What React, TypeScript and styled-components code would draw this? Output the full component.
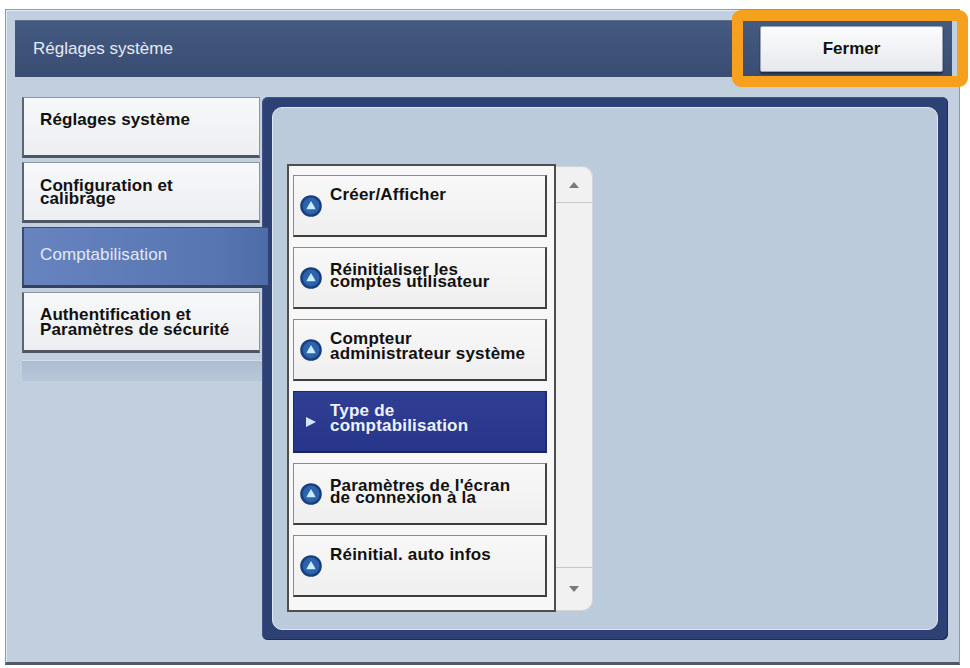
import React from "react";
import styled, { createGlobalStyle } from "styled-components";

const GlobalStyle = createGlobalStyle`
  html, body {
    margin: 0;
    padding: 0;
    background: #ffffff;
  }
  body {
    font-family: "Liberation Sans", Arial, sans-serif;
  }
`;

const Page = styled.div`
  width: 970px;
  height: 668px;
  padding: 9px 0 0 5px;
  box-sizing: border-box;
  overflow: hidden;
`;

const Frame = styled.div`
  width: 955px;
  height: 656px;
  box-sizing: border-box;
  border: 1px solid #8d99aa;
  border-bottom: 3px solid #50586a;
  background: #c2cfde;
  padding: 10px 7px 0 9px;
  box-shadow: inset 1px 1px 0 #e4ebf3;
`;

const TitleBar = styled.div`
  height: 57px;
  box-sizing: border-box;
  display: flex;
  align-items: center;
  justify-content: space-between;
  background: linear-gradient(#455a80, #394d73);
  border-top: 1px solid #5d7092;
  padding: 0 9px 0 18px;
`;

const Title = styled.span`
  color: #e4eaf3;
  font-size: 17px;
`;

const CloseWrap = styled.div`
  position: relative;
`;

const CloseButton = styled.button`
  width: 183px;
  height: 46px;
  box-sizing: border-box;
  border: 1px solid #97a3b5;
  border-radius: 2px;
  background: linear-gradient(#fbfcfd, #e5e8ed);
  box-shadow: 0 2px 2px rgba(0, 0, 0, 0.45);
  font-family: "Liberation Sans", Arial, sans-serif;
  font-size: 17px;
  font-weight: bold;
  color: #111;
  padding: 0;
`;

const Highlight = styled.div`
  position: absolute;
  top: -16px;
  left: -28px;
  right: -25px;
  bottom: -15px;
  border: 11px solid #f6a11d;
  border-radius: 9px;
  pointer-events: none;
`;

const Body = styled.div`
  display: flex;
  align-items: flex-start;
  gap: 2px;
  margin-top: 20px;
  padding-left: 7px;
`;

const Menu = styled.div`
  width: 238px;
  display: flex;
  flex-direction: column;
  gap: 4px;
`;

const MenuItem = styled.div<{ $active?: boolean; $tight?: boolean }>`
  position: relative;
  z-index: 1;
  width: ${(p) => (p.$active ? 246 : 238)}px;
  height: 61px;
  box-sizing: border-box;
  padding: ${(p) => (p.$tight ? 16 : 14)}px 0 0 16px;
  font-size: 17px;
  line-height: ${(p) => (p.$tight ? 13 : 15)}px;
  letter-spacing: 0.1px;
  font-weight: bold;
  color: #111;
  background: linear-gradient(#f7f8fa, #eceef1);
  border: 1px solid #8e96a3;
  border-left: 2px solid #5e6572;
  border-bottom: 3px solid #4f5663;

  ${(p) =>
    p.$active &&
    `
    display: flex;
    align-items: center;
    padding: 0 0 4px 16px;
    font-weight: normal;
    color: #e3e9f4;
    background: linear-gradient(90deg, #6784bf, #5675b1 80%, #4e6ca8);
    border: 1px solid #3c4c70;
    border-left: 2px solid #3c4c70;
    border-bottom: 3px solid #334264;
    border-right: none;
  `}
`;

const Line = styled.span`
  display: block;
  white-space: nowrap;
`;

const MenuStrip = styled.div`
  height: 20px;
  margin-top: 3px;
  width: 240px;
  background: linear-gradient(#adbdd0, #b8c7d8);
  border-top: 1px solid #d3dde9;
`;

const Panel = styled.div`
  width: 686px;
  height: 543px;
  box-sizing: border-box;
  background: #2d4175;
  border-radius: 6px;
  padding: 10px;
  box-shadow: inset -1px -1px 0 #1d2c55, inset 1px 1px 0 #40558a;
`;

const PanelInner = styled.div`
  height: 100%;
  box-sizing: border-box;
  background: #bccbdc;
  border: 1px solid #dfe7f0;
  border-radius: 10px;
  padding: 56px 0 0 14px;
  display: flex;
  align-items: flex-start;
`;

const ListBox = styled.div`
  width: 269px;
  height: 448px;
  box-sizing: border-box;
  border: 2px solid #4e4e4e;
  background: #f7f7f7;
  padding: 9px 7px 0 4px;
  display: flex;
  flex-direction: column;
  gap: 10px;
`;

const ListItem = styled.div<{ $active?: boolean }>`
  height: 62px;
  box-sizing: border-box;
  display: grid;
  grid-template-columns: 22px 1fr;
  column-gap: 8px;
  padding-left: 6px;
  background: ${(p) =>
    p.$active ? "linear-gradient(#2f3f93, #28368a)" : "linear-gradient(#f8f8f8, #efefef)"};
  border: 1px solid ${(p) => (p.$active ? "#1e2a6e" : "#8a8a8a")};
  border-right: 2px solid ${(p) => (p.$active ? "#1e2a6e" : "#444")};
  border-bottom: 2px solid ${(p) => (p.$active ? "#1b2560" : "#3d3d3d")};
`;

const IconCell = styled.div`
  align-self: center;
  display: flex;
  width: 22px;
  height: 22px;
`;

const ItemText = styled.div<{ $active?: boolean; $tight?: boolean }>`
  padding-top: ${(p) => (p.$tight ? 16 : 11)}px;
  font-size: 17px;
  font-weight: bold;
  letter-spacing: 0.2px;
  line-height: ${(p) => (p.$tight ? 12 : 15)}px;
  color: ${(p) => (p.$active ? "#eef2fb" : "#111")};
`;

const ScrollBar = styled.div`
  width: 37px;
  height: 445px;
  margin-top: 2px;
  box-sizing: border-box;
  background: #f1f1f1;
  border: 1px solid #d4d4d4;
  border-left: none;
  border-radius: 0 11px 11px 0;
  display: flex;
  flex-direction: column;
  justify-content: space-between;
`;

const ScrollButton = styled.div<{ $down?: boolean }>`
  height: ${(p) => (p.$down ? 42 : 35)}px;
  display: flex;
  align-items: center;
  justify-content: center;
  ${(p) => (p.$down ? "border-top: 1px solid #c8c8c8;" : "border-bottom: 1px solid #c8c8c8;")}
`;

const menu = [
  { lines: ["Réglages système"] },
  { lines: ["Configuration et", "calibrage"], tight: true },
  { lines: ["Comptabilisation"], active: true },
  { lines: ["Authentification et", "Paramètres de sécurité"] },
];

const items = [
  { lines: ["Créer/Afficher"] },
  { lines: ["Réinitialiser les", "comptes utilisateur"], tight: true },
  { lines: ["Compteur", "administrateur système"] },
  { lines: ["Type de", "comptabilisation"], active: true },
  { lines: ["Paramètres de l'écran", "de connexion à la"], tight: true },
  { lines: ["Réinitial. auto infos"] },
];

const UpCircleIcon = () => (
  <svg width="22" height="22" viewBox="0 0 22 22">
    <circle cx="11" cy="11" r="9.6" fill="#2c62ae" stroke="#183f7a" strokeWidth="2.4" />
    <path d="M11 6 L15.4 13.6 Q15.6 14.3 14.9 14.3 L7.1 14.3 Q6.4 14.3 6.6 13.6 Z" fill="#c9edff" />
  </svg>
);

const PlayIcon = () => (
  <svg width="22" height="22" viewBox="0 0 22 22">
    <path d="M6 6 L16 11 L6 16 Z" fill="#cfe9ff" />
  </svg>
);

const Arrow = ({ down }: { down?: boolean }) => (
  <svg width="10" height="6" viewBox="0 0 10 6">
    <path d={down ? "M0 0 L10 0 L5 6 Z" : "M0 6 L5 0 L10 6 Z"} fill="#7a7a7a" />
  </svg>
);

const App = () => {
  return (
    <Page>
      <GlobalStyle />
      <Frame>
        <TitleBar>
          <Title>Réglages système</Title>
          <CloseWrap>
            <CloseButton>Fermer</CloseButton>
            <Highlight />
          </CloseWrap>
        </TitleBar>
        <Body>
          <Menu>
            {menu.map((m) => (
              <MenuItem key={m.lines[0]} $active={m.active} $tight={m.tight}>
                <div>
                  {m.lines.map((l) => (
                    <Line key={l}>{l}</Line>
                  ))}
                </div>
              </MenuItem>
            ))}
            <MenuStrip />
          </Menu>
          <Panel>
            <PanelInner>
              <ListBox>
                {items.map((item) => (
                  <ListItem key={item.lines[0]} $active={item.active}>
                    <IconCell>{item.active ? <PlayIcon /> : <UpCircleIcon />}</IconCell>
                    <ItemText $active={item.active} $tight={item.tight}>
                      {item.lines.map((l) => (
                        <Line key={l}>{l}</Line>
                      ))}
                    </ItemText>
                  </ListItem>
                ))}
              </ListBox>
              <ScrollBar>
                <ScrollButton>
                  <Arrow />
                </ScrollButton>
                <ScrollButton $down>
                  <Arrow down />
                </ScrollButton>
              </ScrollBar>
            </PanelInner>
          </Panel>
        </Body>
      </Frame>
    </Page>
  );
};

export default App;
